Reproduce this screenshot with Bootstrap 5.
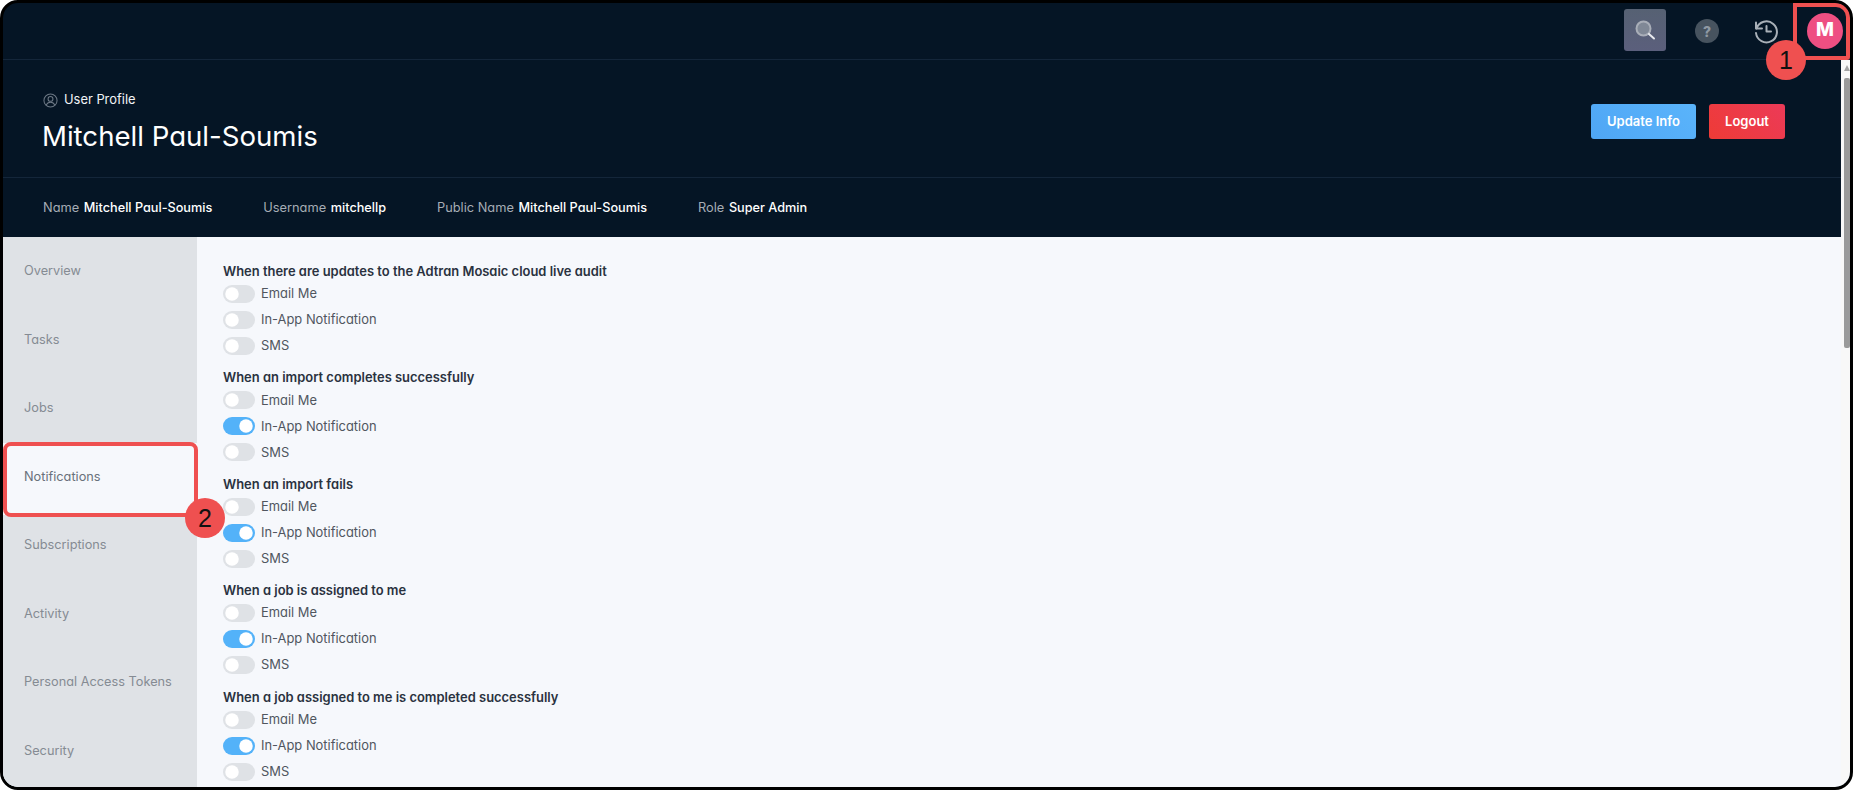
<!DOCTYPE html>
<html lang="en">
<head>
<meta charset="utf-8">
<title>User Profile</title>
<link href="https://cdn.jsdelivr.net/npm/bootstrap@5.3.0/dist/css/bootstrap.min.css" rel="stylesheet">
<style>
html,body{height:100%;margin:0;background:#fff;overflow:hidden}
body{font-family:Inter,"Liberation Sans",sans-serif;font-feature-settings:"cv11" 1;font-size:13px}
.frame{position:relative;height:790px;border:3px solid #000;border-radius:18px;overflow:hidden;background:#051525}
.topbar{height:57px;border-bottom:1px solid #14263a;gap:0}
.tool{width:42px;height:42px;border-radius:3px}
.tool-search{background:linear-gradient(180deg,#566173,#5b5f7c);margin-right:20px;margin-top:-2px}
.tool-help{width:42px;margin-right:17px}
.tool-hist{width:42px;margin-right:20px}
.help-dot{width:24px;height:24px;border-radius:50%;background:#47535f;color:#8f99a3;font-size:14px;font-weight:800}
.avatar{width:36px;height:36px;border-radius:50%;background:#ee4f82;color:#fff;font-size:19px;font-weight:800;margin-right:7px;margin-top:-1px}
.viewport{height:730px}
.scroller{min-width:0}
.phead{height:118px;padding:32px 56px 0 40px;border-bottom:1px solid #14263a}
.crumb{color:#f1f3f6;font-size:12.9px;line-height:16px;gap:6px}
.ptitle{color:#fff;font-size:27.6px;font-weight:400;line-height:34px;margin:11px 0 0 -1px}
.btn-upd,.btn-out{height:35px;font-size:13px;font-weight:600;color:#fff;border:0;border-radius:3px;padding:0;line-height:35px;margin-top:12px}
.btn-upd{width:105px;background:linear-gradient(45deg,#4fa6f5,#5ab4fb);margin-right:13px}
.btn-out{width:76px;background:linear-gradient(45deg,#ee3b36,#ec3a58)}
.btn-upd:hover,.btn-upd:active,.btn-out:hover,.btn-out:active{color:#fff}
.pinfo{height:59px;padding-left:40px;gap:51px;color:#a6adb5;font-size:12.8px}
.pinfo b{font-weight:450;color:#fff;margin-left:1px;font-size:12.7px}
.layout{background:#f6f8fc;height:553px}
.sidenav{width:194px;background:#dfe2e6}
.side-link{display:block;height:68.5px;padding-left:21px;line-height:68.5px;color:#858b93;font-size:12.75px;text-decoration:none}
.side-link.on{background:#f6f8fc;color:#69717b;height:72px;margin-bottom:-3.5px}
.notes{padding:25px 0 0 26px}
.note-group{height:106.4px}
.note-title{font-size:12.95px;font-weight:600;color:#2a3240;line-height:18px;margin:0 0 1px}
.note-row{height:26px;margin:0;padding:0;min-height:0;display:flex;align-items:center;color:#50565f}
.note-row label{margin-left:6px;font-size:12.9px}
.note-row .form-check-input{width:32px;height:18px;margin:0;float:none;border:0;background-color:#dfe2e6;box-shadow:none;background-image:url("data:image/svg+xml,%3csvg xmlns='http://www.w3.org/2000/svg' viewBox='-4 -4 8 8'%3e%3ccircle r='3' fill='%23fff'/%3e%3c/svg%3e")}
.note-row .form-check-input:checked{background-color:#53b2f9}
.sbar{width:9px;background:#f8f8f8;padding-left:3px}
.sbar-arrow{width:0;height:0;border:3px solid transparent;border-top:0;border-bottom:6px solid #a3a3a3;margin:5px 0 7px}
.sbar-thumb{width:6px;height:270px;background:#9a9a9a;border-radius:2px}
.mark-box{position:absolute;border:4px solid #ef5050;pointer-events:none}
.mark-a{left:1790px;top:0;width:57px;height:57px;border-radius:0 14px 3px 3px}
.mark-b{left:0;top:439px;width:195px;height:75px;border-radius:8px}
.mark-num{position:absolute;width:40px;height:40px;border-radius:50%;background:#ef5050;color:#111;font-family:"Liberation Sans",sans-serif;font-size:25px;text-align:center;line-height:40px;font-feature-settings:normal}
.num-a{left:1763px;top:37px}
.num-b{left:182px;top:495px}
</style>
</head>
<body>
<div class="frame">
  <div class="topbar d-flex align-items-center justify-content-end">
    <div class="tool tool-search d-flex align-items-center justify-content-center">
      <svg width="22" height="22" viewBox="0 0 22 22" fill="none"><circle cx="9.5" cy="9.5" r="7" fill="#808896" stroke="#a9aeb8" stroke-width="2"/><path d="M15 15l5 4.5" stroke="#e8eaee" stroke-width="2" stroke-linecap="round"/></svg>
    </div>
    <div class="tool-help d-flex align-items-center justify-content-center"><span class="help-dot d-flex align-items-center justify-content-center">?</span></div>
    <div class="tool-hist d-flex align-items-center justify-content-center">
      <svg width="26" height="26" viewBox="0 0 26 26" fill="none" stroke="#a9b0b8" stroke-width="2" stroke-linecap="round" stroke-linejoin="round"><path d="M3.5 10.5A10.5 10.5 0 1 1 3 15"/><path d="M3 4.5v6h6"/><path d="M13.5 8v5.5h4.5"/></svg>
    </div>
    <div class="avatar d-flex align-items-center justify-content-center">M</div>
  </div>
  <div class="viewport d-flex">
    <div class="scroller flex-grow-1">
      <div class="phead d-flex justify-content-between">
        <div>
          <div class="crumb d-flex align-items-center">
            <svg width="15" height="15" viewBox="0 0 16 16" fill="none" stroke="#6d7885" stroke-width="1.1"><circle cx="8" cy="8" r="7"/><circle cx="8" cy="6.3" r="2.6"/><path d="M3.4 13c.8-2.2 2.6-3.2 4.6-3.2s3.8 1 4.6 3.2"/></svg>
            <span>User Profile</span>
          </div>
          <h1 class="ptitle">Mitchell Paul-Soumis</h1>
        </div>
        <div class="d-flex align-items-start">
          <button type="button" class="btn btn-upd">Update Info</button>
          <button type="button" class="btn btn-out">Logout</button>
        </div>
      </div>
      <div class="pinfo d-flex align-items-center">
        <span>Name <b>Mitchell Paul-Soumis</b></span>
        <span>Username <b>mitchellp</b></span>
        <span>Public Name <b>Mitchell Paul-Soumis</b></span>
        <span>Role <b>Super Admin</b></span>
      </div>
      <div class="layout d-flex">
        <nav class="sidenav flex-shrink-0">
          <a class="side-link" href="#">Overview</a>
          <a class="side-link" href="#">Tasks</a>
          <a class="side-link" href="#">Jobs</a>
          <a class="side-link on" href="#">Notifications</a>
          <a class="side-link" href="#">Subscriptions</a>
          <a class="side-link" href="#">Activity</a>
          <a class="side-link" href="#">Personal Access Tokens</a>
          <a class="side-link" href="#">Security</a>
        </nav>
        <div class="notes flex-grow-1">
          <div class="note-group">
            <p class="note-title">When there are updates to the Adtran Mosaic cloud live audit</p>
            <div class="form-check form-switch note-row"><input class="form-check-input" type="checkbox" id="a1"><label for="a1">Email Me</label></div>
            <div class="form-check form-switch note-row"><input class="form-check-input" type="checkbox" id="a2"><label for="a2">In-App Notification</label></div>
            <div class="form-check form-switch note-row"><input class="form-check-input" type="checkbox" id="a3"><label for="a3">SMS</label></div>
          </div>
          <div class="note-group">
            <p class="note-title">When an import completes successfully</p>
            <div class="form-check form-switch note-row"><input class="form-check-input" type="checkbox" id="b1"><label for="b1">Email Me</label></div>
            <div class="form-check form-switch note-row"><input class="form-check-input" type="checkbox" id="b2" checked><label for="b2">In-App Notification</label></div>
            <div class="form-check form-switch note-row"><input class="form-check-input" type="checkbox" id="b3"><label for="b3">SMS</label></div>
          </div>
          <div class="note-group">
            <p class="note-title">When an import fails</p>
            <div class="form-check form-switch note-row"><input class="form-check-input" type="checkbox" id="c1"><label for="c1">Email Me</label></div>
            <div class="form-check form-switch note-row"><input class="form-check-input" type="checkbox" id="c2" checked><label for="c2">In-App Notification</label></div>
            <div class="form-check form-switch note-row"><input class="form-check-input" type="checkbox" id="c3"><label for="c3">SMS</label></div>
          </div>
          <div class="note-group">
            <p class="note-title">When a job is assigned to me</p>
            <div class="form-check form-switch note-row"><input class="form-check-input" type="checkbox" id="d1"><label for="d1">Email Me</label></div>
            <div class="form-check form-switch note-row"><input class="form-check-input" type="checkbox" id="d2" checked><label for="d2">In-App Notification</label></div>
            <div class="form-check form-switch note-row"><input class="form-check-input" type="checkbox" id="d3"><label for="d3">SMS</label></div>
          </div>
          <div class="note-group">
            <p class="note-title">When a job assigned to me is completed successfully</p>
            <div class="form-check form-switch note-row"><input class="form-check-input" type="checkbox" id="e1"><label for="e1">Email Me</label></div>
            <div class="form-check form-switch note-row"><input class="form-check-input" type="checkbox" id="e2" checked><label for="e2">In-App Notification</label></div>
            <div class="form-check form-switch note-row"><input class="form-check-input" type="checkbox" id="e3"><label for="e3">SMS</label></div>
          </div>
        </div>
      </div>
    </div>
    <div class="sbar flex-shrink-0">
      <div class="sbar-arrow"></div>
      <div class="sbar-thumb"></div>
    </div>
  </div>
  <div class="mark-box mark-a"></div>
  <div class="mark-box mark-b"></div>
  <div class="mark-num num-a">1</div>
  <div class="mark-num num-b">2</div>
</div>
<script src="https://cdn.jsdelivr.net/npm/bootstrap@5.3.0/dist/js/bootstrap.bundle.min.js"></script>
</body>
</html>
